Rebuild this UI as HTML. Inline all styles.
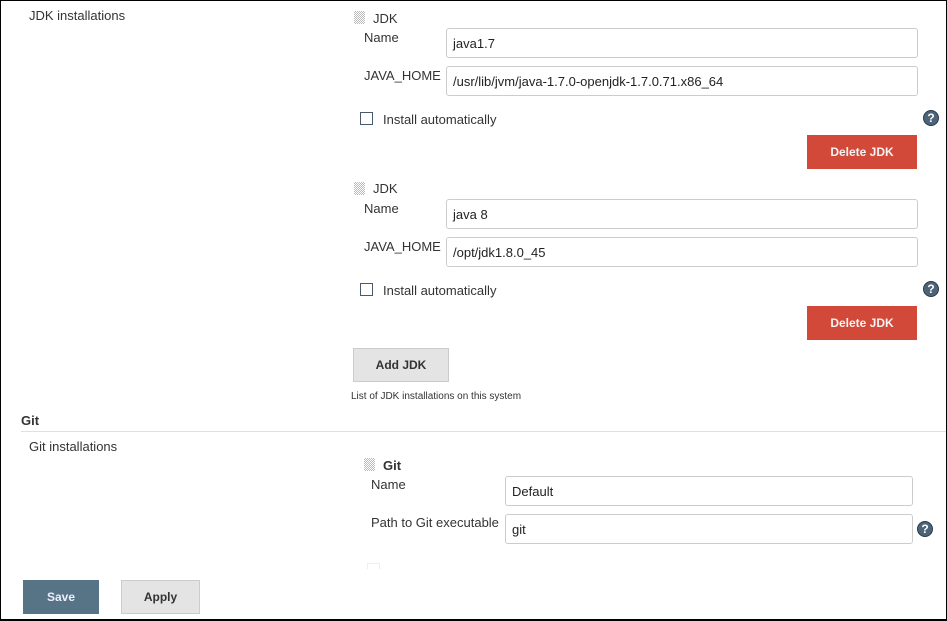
<!DOCTYPE html>
<html><head><meta charset="utf-8"><style>
*{margin:0;padding:0;box-sizing:border-box}
body{width:947px;height:621px;overflow:hidden;background:#fff;font-family:"Liberation Sans",Arial,sans-serif;font-size:13px;color:#333;position:relative}
.frame{position:absolute;left:0;top:0;width:947px;height:621px;border:1px solid #000;border-bottom-width:2px;border-top-width:1px}
.a{position:absolute;white-space:nowrap}
.inp{position:absolute;border:1px solid #ccc;border-radius:3px;background:#fff;padding-left:6px;font-size:13px;color:#222;display:flex;align-items:center}
.cb{position:absolute;width:13px;height:13px;border:1px solid #4a5a6a}
.help{position:absolute;width:16px;height:16px;border-radius:50%;background:#4d6478;border:1px solid #2b3a48;color:#fff;font-weight:bold;font-size:12px;line-height:14px;text-align:center}
.del{position:absolute;width:110px;height:34px;background:#d24939;color:#f4f4f4;font-weight:bold;font-size:12px;display:flex;align-items:center;justify-content:center}
.grip{position:absolute;width:11px;height:13px;background:repeating-conic-gradient(#bbb 0 25%,#fff 0 50%) 0 0/2px 2px}
.gbtn{position:absolute;background:#e4e4e4;border:1px solid #ccc;color:#333;font-weight:bold;font-size:12px;display:flex;align-items:center;justify-content:center}
</style></head><body>
<div class="a" style="left:29px;top:8px">JDK installations</div>

<div class="grip" style="left:354px;top:11px"></div>
<div class="a" style="left:373px;top:11px">JDK</div>
<div class="a" style="left:364px;top:30px">Name</div>
<div class="inp" style="left:446px;top:28px;width:472px;height:30px">java1.7</div>
<div class="a" style="left:364px;top:68px">JAVA_HOME</div>
<div class="inp" style="left:446px;top:66px;width:472px;height:30px">/usr/lib/jvm/java-1.7.0-openjdk-1.7.0.71.x86_64</div>
<div class="cb" style="left:360px;top:112px"></div>
<div class="a" style="left:383px;top:112px">Install automatically</div>
<div class="help" style="left:923px;top:110px">?</div>
<div class="del" style="left:807px;top:135px">Delete JDK</div>

<div class="grip" style="left:354px;top:182px"></div>
<div class="a" style="left:373px;top:181px">JDK</div>
<div class="a" style="left:364px;top:201px">Name</div>
<div class="inp" style="left:446px;top:199px;width:472px;height:30px">java 8</div>
<div class="a" style="left:364px;top:239px">JAVA_HOME</div>
<div class="inp" style="left:446px;top:237px;width:472px;height:30px">/opt/jdk1.8.0_45</div>
<div class="cb" style="left:360px;top:283px"></div>
<div class="a" style="left:383px;top:283px">Install automatically</div>
<div class="help" style="left:923px;top:281px">?</div>
<div class="del" style="left:807px;top:306px">Delete JDK</div>

<div class="gbtn" style="left:353px;top:348px;width:96px;height:34px">Add JDK</div>
<div class="a" style="left:351px;top:391px;font-size:10px">List of JDK installations on this system</div>

<div class="a" style="left:21px;top:413px;font-weight:bold;color:#333">Git</div>
<div class="a" style="left:21px;top:431px;width:926px;height:1px;background:#e0e0e0"></div>
<div class="a" style="left:29px;top:439px">Git installations</div>

<div class="grip" style="left:364px;top:458px"></div>
<div class="a" style="left:383px;top:458px;font-weight:bold">Git</div>
<div class="a" style="left:371px;top:477px">Name</div>
<div class="inp" style="left:505px;top:476px;width:408px;height:30px">Default</div>
<div class="a" style="left:371px;top:515px">Path to Git executable</div>
<div class="inp" style="left:505px;top:514px;width:408px;height:30px">git</div>
<div class="help" style="left:917px;top:521px">?</div>
<div class="a" style="left:367px;top:563px;width:13px;height:6px;border:1px solid #eee;border-bottom:none"></div>

<div class="a" style="left:23px;top:580px;width:76px;height:34px;background:#567486;color:#eef;font-weight:bold;font-size:12px;display:flex;align-items:center;justify-content:center">Save</div>
<div class="gbtn" style="left:121px;top:580px;width:79px;height:34px">Apply</div>
<div class="frame"></div>
</body></html>
